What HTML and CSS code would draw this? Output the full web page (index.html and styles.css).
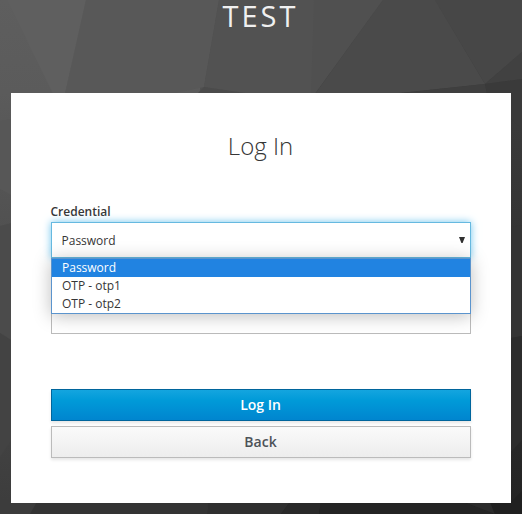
FILE: index.html
```html
<!DOCTYPE html>
<html lang="en">
<head>
<meta charset="utf-8">
<title>Log In</title>
<link rel="stylesheet" href="styles.css">
</head>
<body>
<svg class="backdrop" viewBox="0 0 522 514" preserveAspectRatio="none" aria-hidden="true">
  <defs>
    <linearGradient id="left" x1="0" y1="0" x2="0" y2="1">
      <stop offset="0" stop-color="#5e5e5e"/><stop offset=".18" stop-color="#5b5b5b"/><stop offset=".55" stop-color="#4d4d4d"/><stop offset="1" stop-color="#3c3c3c"/>
    </linearGradient>
    <linearGradient id="right" x1="0" y1="0" x2="0" y2="1">
      <stop offset="0" stop-color="#484848"/><stop offset=".18" stop-color="#3c3c3c"/><stop offset=".55" stop-color="#313131"/><stop offset="1" stop-color="#232323"/>
    </linearGradient>
  </defs>
  <path fill="url(#left)" d="M0 0H261V514H0z"/>
  <path fill="url(#right)" d="M261 0H522V514H261z"/>
  <path fill="#505050" d="M200 0H383L315 94H200z"/>
  <path fill="#5f5f5f" d="M7 0H86L65 94H53z"/>
  <path fill="#585858" d="M86 0H219L204 87L170 94H65z"/>
  <path fill="#525252" d="M219 0H314L311 94H250L204 87z"/>
  <path fill="#4b4b4b" d="M204 87L252 94H197z"/>
  <path fill="#4a4a4a" d="M383 0H435L485 84L390 94H315z"/>
  <path fill="#474747" d="M435 0H522V52L485 84z"/>
  <path fill="#414141" d="M522 52V79L485 84z"/>
  <path fill="#3f3f3f" d="M485 84L487 94H393z"/>
  <path fill="#3a3a3a" d="M485 84L522 79V130L487 94z"/>
  <path fill="#575757" d="M0 121L11 119V195L0 189z"/>
  <path fill="#4b4b4b" d="M0 226L11 223V340L0 333z"/>
  <path fill="#434343" d="M0 333L11 340V441L0 457z"/>
  <path fill="#343434" d="M511 227L522 225V336L511 338z"/>
  <path fill="#2c2c2c" d="M511 338L522 336V440L511 452z"/>
  <path fill="#333" d="M0 502H208L207 514H0z"/>
  <path fill="#3c3c3c" d="M0 500H38L30 514H0z"/>
  <path fill="#2f2f2f" d="M208 502H290L281 514H207z"/>
  <path fill="#292929" d="M290 502H321L319 514H281z"/>
  <path fill="#242424" d="M321 502H464L495 514H319z"/>
  <path fill="#2b2b2b" d="M464 502H490L495 514z"/>
  <path fill="#202020" d="M490 502H511L522 491V514H495z"/>
</svg>
<header class="realm">TEST</header>
<main class="card">
  <h1 class="title">Log In</h1>
  <form class="form">
    <div class="label">Credential</div>
    <div class="field">
      <div class="select"><span>Password</span><svg class="arrow" viewBox="0 0 6 6"><path d="M0 0H6L3.6 6H2.4z"/></svg></div>
      <div class="menu">
        <div class="option selected">Password</div>
        <div class="option">OTP - otp1</div>
        <div class="option">OTP - otp2</div>
      </div>
    </div>
    <div class="input"></div>
    <button class="button primary" type="button">Log In</button>
    <button class="button secondary" type="button">Back</button>
  </form>
</main>
</body>
</html>
```
FILE: styles.css
```css
* { box-sizing: border-box; }
html, body { height: 100%; }
body {
  margin: 0;
  overflow: hidden;
  background: #393939;
  color: #363636;
  font-family: "Open Sans", sans-serif;
  font-size: 12px;
}
.backdrop {
  position: absolute;
  inset: 0;
  z-index: -1;
  width: 100%;
  height: 100%;
}
.realm {
  height: 93px;
  padding-right: 1px;
  color: #f0f0f0;
  font-size: 29px;
  font-weight: 400;
  letter-spacing: 3px;
  line-height: 32px;
  text-align: center;
}
.card {
  width: 500px;
  height: 410px;
  margin: 0 auto;
  padding: 36px 40px 0;
  background: #fff;
}
.title {
  margin: 0;
  padding-right: 1px;
  font-size: 24px;
  font-weight: 300;
  line-height: 34px;
  text-align: center;
}
.form { padding-top: 39px; }
.label {
  height: 20px;
  margin-left: -0.5px;
  font-weight: 600;
  line-height: 20px;
}
.field { position: relative; }
.select {
  display: flex;
  align-items: center;
  justify-content: space-between;
  height: 36px;
  padding: 0 5px 0 9.5px;
  border: 1px solid #66b9e0;
  background: #fff;
  box-shadow: 0 0 8px #70c5ee;
}
.arrow { width: 6px; height: 6px; margin-top: -1px; fill: #303030; }
.menu {
  position: absolute;
  z-index: 1;
  top: 36px;
  left: 0;
  width: 100%;
  border: 1px solid #5b94cd;
  background: #fff;
  box-shadow: 0 2px 18px rgba(0, 0, 0, .26);
}
.option {
  height: 18px;
  padding-left: 10px;
  line-height: 18px;
}
.selected { background: #2183e1; color: #fff; }
.input {
  height: 36px;
  margin: 40px 0 55px;
  border: 1px solid #bbb;
}
.button {
  display: block;
  width: 100%;
  height: 32px;
  padding: 0 1px 0 0;
  border: 1px solid #bbb;
  font: 600 14px/30px "Open Sans", sans-serif;
  text-align: center;
  box-shadow: 0 2px 3px rgba(3, 3, 3, .1);
}
.primary {
  margin-bottom: 5px;
  border-color: #00659c;
  background: linear-gradient(#14a5df, #009ad8 35%, #0085cf);
  color: #fff;
}
.secondary {
  background: linear-gradient(#fafafa, #ededed);
  color: #4d5258;
}
```
